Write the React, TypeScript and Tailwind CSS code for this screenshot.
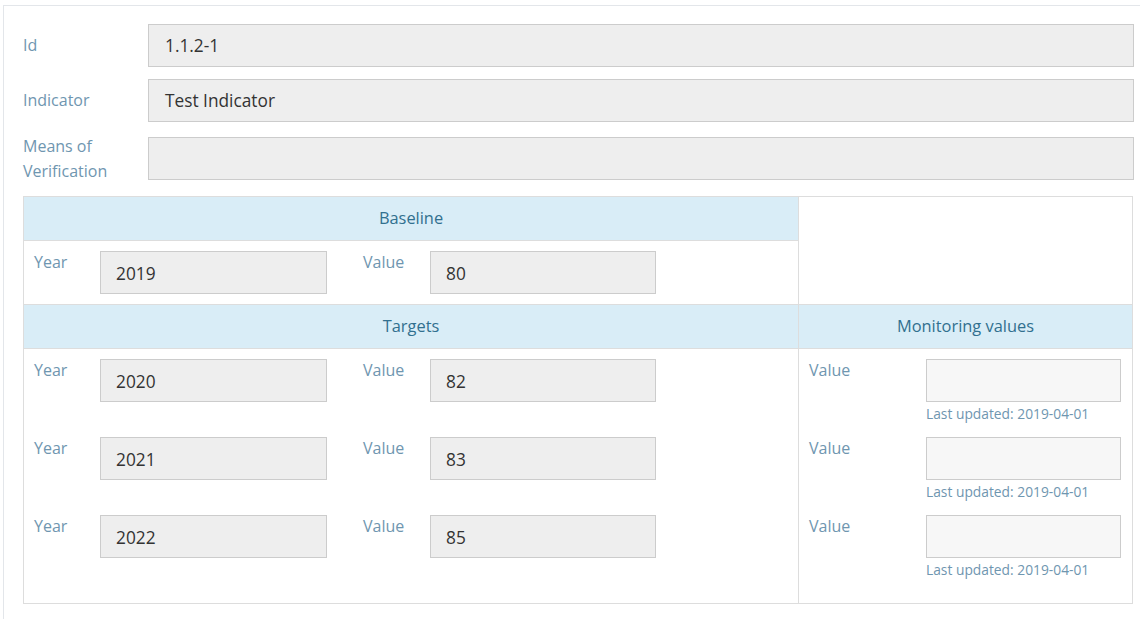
import React from "react";

const font = { fontFamily: '"Open Sans", "Liberation Sans", sans-serif' };

function TopRow({ label, value, top }: { label: React.ReactNode; value: string; top: string }) {
  return (
    <div className={`flex h-[43px] items-center ${top}`}>
      <div className="w-[125px] text-[16px] leading-[25px] text-[#6f96b0]">{label}</div>
      <div className="h-[43px] w-[986px] border border-[#cccccc] bg-[#eeeeee] px-[16px] text-[17.3px] leading-[41px] text-[#333333]">
        {value}
      </div>
    </div>
  );
}

function YearValue({ year, value }: { year: string; value: string }) {
  return (
    <div className="flex h-[78px] items-start">
      <div className="w-[66px] text-[16px] leading-[24px] text-[#6f96b0]">Year</div>
      <div className="mt-[1px] h-[43px] w-[227px] border border-[#cccccc] bg-[#eeeeee] px-[15px] pt-[1px] text-[17.3px] leading-[41px] text-[#333333]">
        {year}
      </div>
      <div className="w-[36px]" />
      <div className="w-[67px] text-[16px] leading-[24px] text-[#6f96b0]">Value</div>
      <div className="mt-[1px] h-[43px] w-[226px] border border-[#cccccc] bg-[#eeeeee] px-[15px] pt-[1px] text-[17.3px] leading-[41px] text-[#333333]">
        {value}
      </div>
    </div>
  );
}

function Monitor() {
  return (
    <div className="flex h-[78px] items-start">
      <div className="w-[117px] text-[16px] leading-[24px] text-[#6f96b0]">Value</div>
      <div className="flex flex-col">
        <div className="mt-[1px] h-[43px] w-[195px] border border-[#cccccc] bg-[#f7f7f7]" />
        <div className="pt-[2px] text-[13.8px] leading-[20px] text-[#6f96b0]">Last updated: 2019-04-01</div>
      </div>
    </div>
  );
}

export default function App() {
  return (
    <div className="h-[619px] w-[1140px] overflow-hidden bg-white" style={font}>
      <div className="ml-[3px] mt-[5px] h-[640px] border-l border-t border-[#e3e6ea] pl-[19px]">
        <TopRow top="mt-[18px]" label="Id" value="1.1.2-1" />
        <TopRow top="mt-[12px]" label="Indicator" value="Test Indicator" />
        <div className="mt-[15px] flex h-[43px] items-center">
          <div className="w-[125px] text-[16px] leading-[25px] text-[#6f96b0]">
            Means of
            <br />
            Verification
          </div>
          <div className="h-[43px] w-[986px] border border-[#cccccc] bg-[#eeeeee]" />
        </div>

        <div className="mt-[16px] w-[1110px] border border-[#dddddd]">
          <div className="flex">
            <div className="w-[775px] border-r border-[#dddddd]">
              <div className="flex h-[44px] items-center justify-center border-b border-[#dddddd] bg-[#d9edf7] text-[16.4px] text-[#31708f]">
                Baseline
              </div>
              <div className="h-[63px] pl-[10px] pt-[9px]">
                <YearValue year="2019" value="80" />
              </div>
            </div>
            <div className="flex-1" />
          </div>
          <div className="flex border-t border-[#dddddd]">
            <div className="w-[775px] border-r border-[#dddddd]">
              <div className="flex h-[44px] items-center justify-center border-b border-[#dddddd] bg-[#d9edf7] text-[16.4px] text-[#31708f]">
                Targets
              </div>
              <div className="h-[254px] pl-[10px] pt-[9px]">
                <YearValue year="2020" value="82" />
                <YearValue year="2021" value="83" />
                <YearValue year="2022" value="85" />
              </div>
            </div>
            <div className="flex-1">
              <div className="flex h-[44px] items-center justify-center border-b border-[#dddddd] bg-[#d9edf7] text-[16.4px] text-[#31708f]">
                Monitoring values
              </div>
              <div className="pl-[10px] pt-[9px]">
                <Monitor />
                <Monitor />
                <Monitor />
              </div>
            </div>
          </div>
        </div>
      </div>
    </div>
  );
}
